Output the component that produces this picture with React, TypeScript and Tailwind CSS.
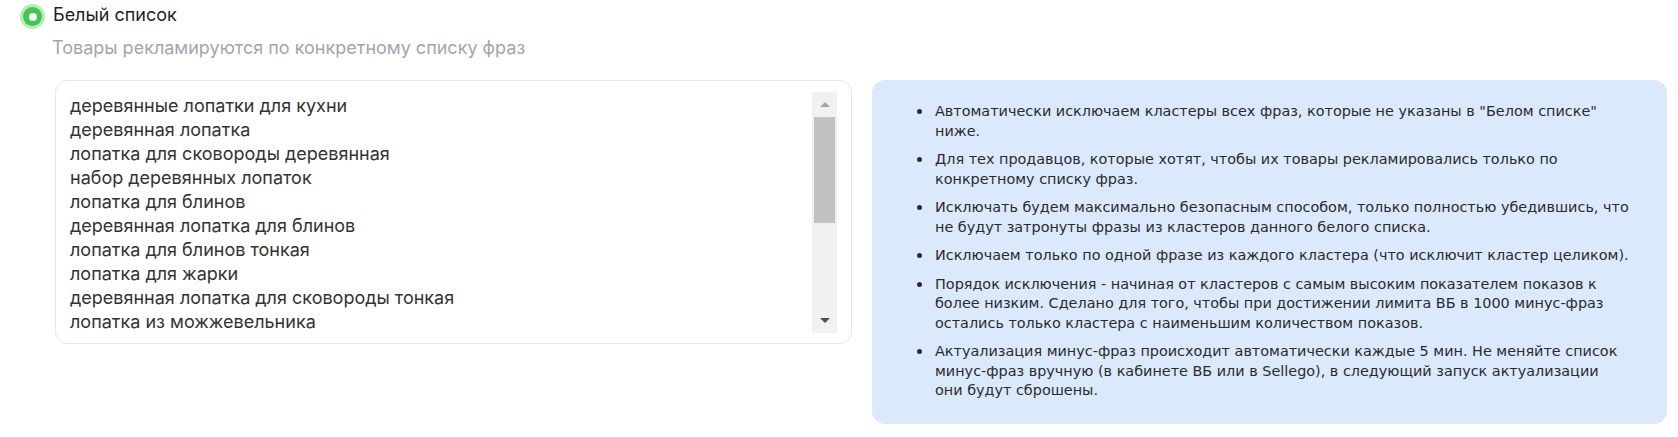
import React from "react";

const phrases = [
  "деревянные лопатки для кухни",
  "деревянная лопатка",
  "лопатка для сковороды деревянная",
  "набор деревянных лопаток",
  "лопатка для блинов",
  "деревянная лопатка для блинов",
  "лопатка для блинов тонкая",
  "лопатка для жарки",
  "деревянная лопатка для сковороды тонкая",
  "лопатка из можжевельника",
];

const notes: React.ReactNode[] = [
  'Автоматически исключаем кластеры всех фраз, которые не указаны в "Белом списке" ниже.',
  "Для тех продавцов, которые хотят, чтобы их товары рекламировались только по конкретному списку фраз.",
  "Исключать будем максимально безопасным способом, только полностью убедившись, что не будут затронуты фразы из кластеров данного белого списка.",
  "Исключаем только по одной фразе из каждого кластера (что исключит кластер целиком).",
  "Порядок исключения - начиная от кластеров с самым высоким показателем показов к более низким. Сделано для того, чтобы при достижении лимита ВБ в 1000 минус-фраз остались только кластера с наименьшим количеством показов.",
  <>
    Актуализация минус-фраз происходит автоматически каждые 5 мин. Не меняйте список минус-фраз вручную (в кабинете ВБ или в Sellego), в следующий запуск актуализации
    <br />
    они будут сброшены.
  </>,
];

export default function App() {
  return (
    <div className="w-[1678px] h-[437px] bg-white pt-[4px] pl-[20px] pr-[11px] font-['Inter',sans-serif]">
      <div className="flex items-center gap-[8px] h-[25px]">
        <div className="w-[25px] h-[25px] shrink-0 rounded-full bg-[#b9ebb2] flex items-center justify-center">
          <div className="w-[19px] h-[19px] rounded-full bg-[#3cc94c] flex items-center justify-center">
            <div className="w-[8px] h-[8px] rounded-full bg-white" />
          </div>
        </div>
        <span className="text-[18px] leading-[24px] pb-[3px] text-[#1f1f1f]">Белый список</span>
      </div>
      <div className="ml-[32px] mt-[7px] text-[18px] leading-[24px] text-[#a2a6ae]">
        Товары рекламируются по конкретному списку фраз
      </div>
      <div className="flex gap-[20px] ml-[35px] mt-[20px] items-start">
        <div className="w-[797px] shrink-0 h-[264px] border border-[#e6e6e6] rounded-[12px] flex pt-[11px] pb-[10px] pl-[14px] pr-[14px]">
          <div className="flex-1 pt-[2px] text-[18px] leading-[24px] text-[#333333] overflow-hidden">
            {phrases.map((p) => (
              <div key={p}>{p}</div>
            ))}
          </div>
          <div className="w-[25px] h-full bg-[#f1f1f1] flex flex-col items-center">
            <div className="h-[25px] w-full flex items-center justify-center">
              <div className="w-0 h-0 border-l-[5px] border-r-[5px] border-b-[5px] border-l-transparent border-r-transparent border-b-[#a3a3a3]" />
            </div>
            <div className="w-[21px] h-[106px] bg-[#c1c1c1]" />
            <div className="flex-1" />
            <div className="h-[25px] w-full flex items-center justify-center">
              <div className="w-0 h-0 border-l-[5px] border-r-[5px] border-t-[5px] border-l-transparent border-r-transparent border-t-[#505050]" />
            </div>
          </div>
        </div>
        <div className="flex-1 min-w-0 h-[344px] bg-[#dbe9fc] rounded-[13px] pt-[22px] pl-[45px] pr-[36px] font-['DejaVu_Sans',sans-serif] text-[14.4px] leading-[19.5px] text-[#2b2b2b]">
          <ul className="flex flex-col gap-[9px]">
            {notes.map((n, i) => (
              <li key={i} className="flex">
                <div className="w-[18px] shrink-0 h-[19.5px] flex items-center">
                  <div className="w-[5px] h-[5px] rounded-full bg-[#2b2b2b]" />
                </div>
                <span>{n}</span>
              </li>
            ))}
          </ul>
        </div>
      </div>
    </div>
  );
}
